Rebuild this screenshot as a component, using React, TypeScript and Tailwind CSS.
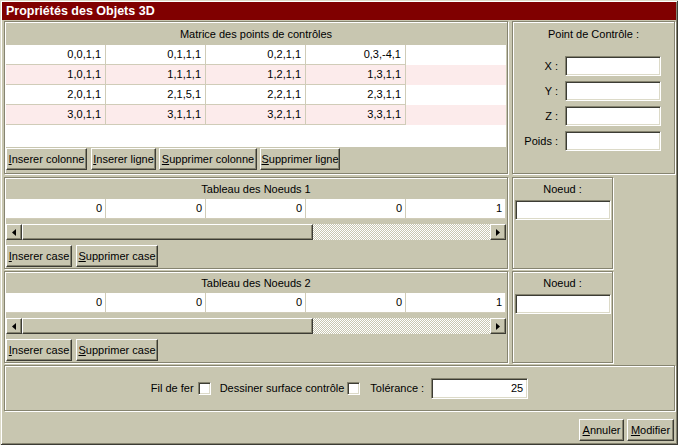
import React from "react";

const font = { fontFamily: '"Liberation Sans", Arial, sans-serif' };

const matrix = [
  ["0,0,1,1", "0,1,1,1", "0,2,1,1", "0,3,-4,1"],
  ["1,0,1,1", "1,1,1,1", "1,2,1,1", "1,3,1,1"],
  ["2,0,1,1", "2,1,5,1", "2,2,1,1", "2,3,1,1"],
  ["3,0,1,1", "3,1,1,1", "3,2,1,1", "3,3,1,1"],
];

const knots = ["0", "0", "0", "0", "1"];

// etched group box
const groove =
  "border border-[#868470] p-px shadow-[inset_1px_1px_0_#ffffff,1px_1px_0_#ffffff]";
const raised =
  "border border-t-white border-l-white border-r-[#3c3c34] border-b-[#3c3c34] shadow-[inset_-1px_-1px_0_#868470] bg-[#c8c6b0]";
const sunken =
  "border border-t-[#868470] border-l-[#868470] border-r-white border-b-white shadow-[inset_1px_1px_0_#3c3c34,inset_-1px_-1px_0_#dcdac8] bg-white";

function Btn({ w, u, rest }: { w: string; u: string; rest: string }) {
  return (
    <button
      className={`${raised} ${w} h-[22px] shrink-0 flex items-center justify-center whitespace-nowrap text-[11px] text-black leading-none`}
    >
      <span className="whitespace-nowrap">
        <span className="underline underline-offset-1">{u}</span>
        {rest}
      </span>
    </button>
  );
}

function Arrow({ dir }: { dir: "left" | "right" }) {
  return (
    <div className={`${raised} w-[16px] h-[16px] flex items-center justify-center shrink-0`}>
      <svg width="4" height="7" viewBox="0 0 4 7">
        {dir === "left" ? (
          <path d="M4 0 L0 3.5 L4 7 Z" fill="#000" />
        ) : (
          <path d="M0 0 L4 3.5 L0 7 Z" fill="#000" />
        )}
      </svg>
    </div>
  );
}

function KnotPanel({ title }: { title: string }) {
  return (
    <div className="flex gap-[4px] h-[92px]">
      <div className={`${groove} w-[504px] flex flex-col`}>
        <div className="h-[21px] flex items-center justify-center text-[11px]">{title}</div>
        <div className="h-[20px] bg-white flex border-b border-[#d0ccb8] overflow-hidden">
          {knots.map((k, i) => (
            <div
              key={i}
              className="w-[100px] shrink-0 border-r border-[#d0ccb8] flex items-center justify-end pr-[3px] text-[11px]"
            >
              {k}
            </div>
          ))}
        </div>
        <div className="mt-[5px] h-[16px] flex">
          <Arrow dir="left" />
          <div className={`${raised} w-[291px] h-[16px]`} />
          <div className="flex-1 bg-[repeating-conic-gradient(#ffffff_0_25%,#c8c6b0_0_50%)] bg-[length:2px_2px]" />
          <Arrow dir="right" />
        </div>
        <div className="mt-[5px] flex gap-[4px]">
          <Btn w="w-[66px]" u="I" rest="nserer case" />
          <Btn w="w-[82px]" u="S" rest="upprimer case" />
        </div>
      </div>
      <div className={`${groove} w-[101px] flex flex-col`}>
        <div className="h-[21px] flex items-center justify-center text-[11px]">Noeud :</div>
        <div className={`${sunken} ml-[1px] w-[96px] h-[20px]`} />
      </div>
    </div>
  );
}

export default function App() {
  return (
    <div
      style={font}
      className="w-[678px] h-[445px] bg-[#c8c6b0] text-black flex flex-col p-[2px] shadow-[inset_1px_1px_0_#dcdac8,inset_-1px_-1px_0_#3c3c34,inset_2px_2px_0_#ffffff,inset_-2px_-2px_0_#868470] overflow-hidden"
    >
      <div className="h-[18px] bg-[#800000] text-white font-bold text-[12.5px] flex items-center pl-[4px]">
        Propriétés des Objets 3D
      </div>

      <div className="flex flex-col pl-[2px] pr-[1px] mt-[1px]">
        {/* row 1 */}
        <div className="flex gap-[4px] h-[153px]">
          <div className={`${groove} w-[504px] flex flex-col`}>
            <div className="h-[22px] flex items-center justify-center text-[11px]">
              Matrice des points de contrôles
            </div>
            <div className="h-[102px] bg-white">
              {matrix.map((row, r) => (
                <div
                  key={r}
                  className={`flex h-[20px] ${r % 2 === 1 ? "bg-[#fcebeb]" : "bg-white"}`}
                >
                  {row.map((c, i) => (
                    <div
                      key={i}
                      className="w-[100px] border-r border-b border-[#d0ccb8] flex items-center justify-end pr-[4px] text-[11px]"
                    >
                      {c}
                    </div>
                  ))}
                </div>
              ))}
            </div>
            <div className="mt-[1px] flex">
              <Btn w="w-[81px]" u="I" rest="nserer colonne" />
              <div className="w-[4px]" />
              <Btn w="w-[65px]" u="I" rest="nserer ligne" />
              <div className="w-[3px]" />
              <Btn w="w-[98px]" u="S" rest="upprimer colonne" />
              <div className="w-[3px]" />
              <Btn w="w-[80px]" u="S" rest="upprimer ligne" />
            </div>
          </div>
          <div className={`${groove} flex-1 flex flex-col`}>
            <div className="h-[22px] flex items-center justify-center text-[11px]">
              Point de Contrôle :
            </div>
            <div className="mt-[11px] flex flex-col gap-[5px] pr-[12px]">
              {["X :", "Y :", "Z :", "Poids :"].map((l) => (
                <div key={l} className="flex items-center justify-end gap-[7px]">
                  <span className="text-[11px]">{l}</span>
                  <div className={`${sunken} w-[96px] h-[20px]`} />
                </div>
              ))}
            </div>
          </div>
        </div>

        <div className="mt-[3px]">
          <KnotPanel title="Tableau des Noeuds 1" />
        </div>
        <div className="mt-[2px]">
          <KnotPanel title="Tableau des Noeuds 2" />
        </div>

        {/* options */}
        <div
          className={`${groove} mt-[2px] h-[46px] flex items-center justify-center text-[11px]`}
        >
          <span>Fil de fer</span>
          <div className={`${sunken} ml-[4px] w-[13px] h-[13px]`} />
          <span className="ml-[9px]">Dessiner surface contrôle</span>
          <div className={`${sunken} ml-[3px] w-[13px] h-[13px]`} />
          <span className="ml-[10px]">Tolérance :</span>
          <div
            className={`${sunken} ml-[7px] w-[97px] h-[21px] flex items-center justify-end pr-[4px]`}
          >
            25
          </div>
        </div>

        <div className="mt-[8px] flex justify-end gap-[3px] pr-[1px]">
          <Btn w="w-[45px]" u="A" rest="nnuler" />
          <Btn w="w-[47px]" u="M" rest="odifier" />
        </div>
      </div>
    </div>
  );
}
